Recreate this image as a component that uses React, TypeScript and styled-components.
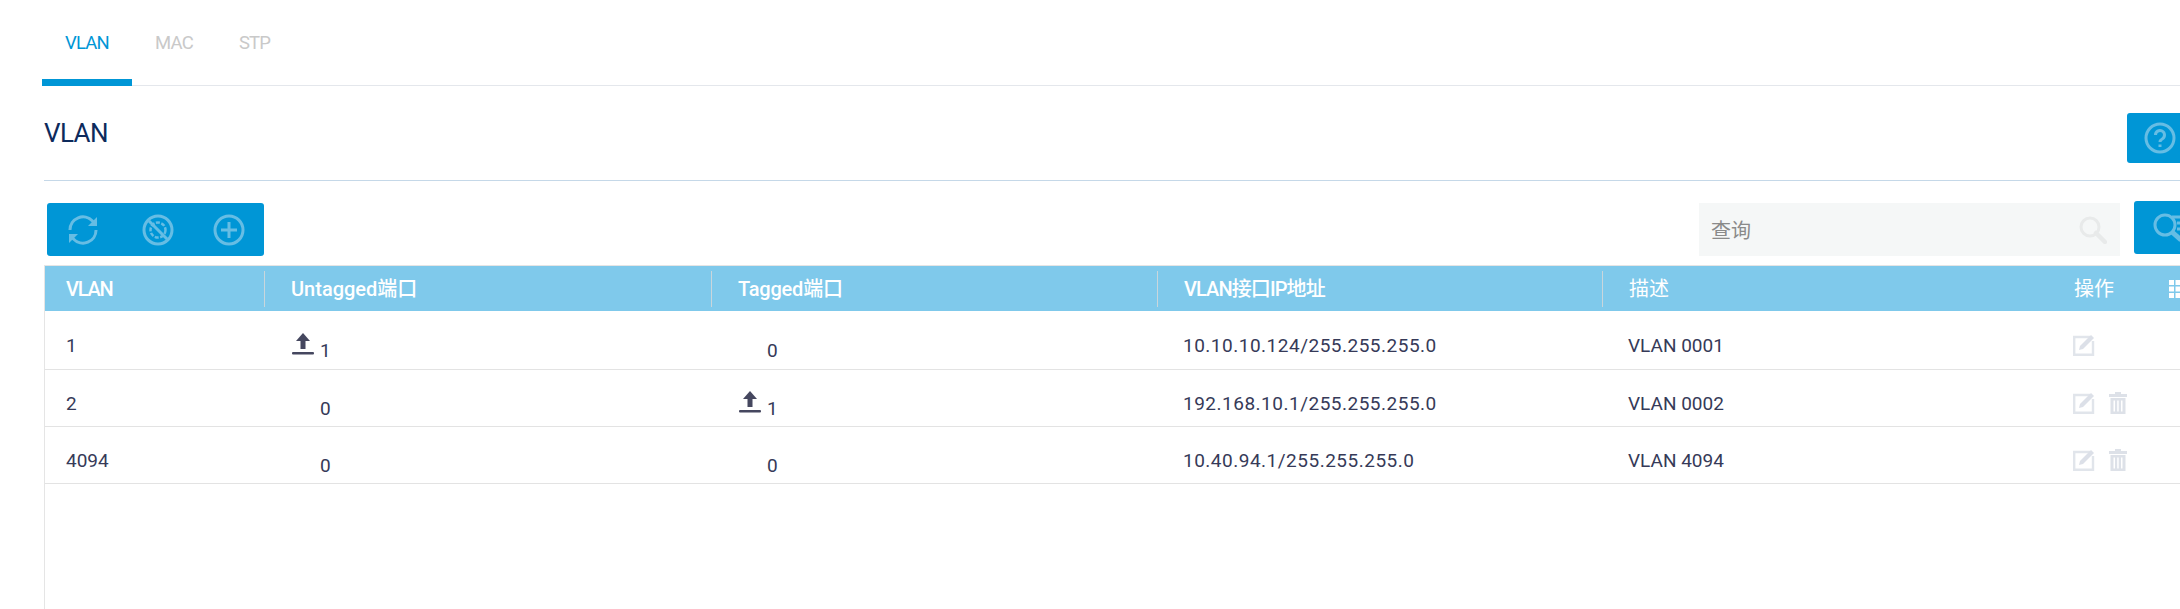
import React from 'react';
import styled, { createGlobalStyle } from 'styled-components';

interface TabProps {
  active?: boolean;
}

interface HeaderCellProps {
  tracking: number;
}

interface VlanRow {
  id: string;
  untagged: string;
  tagged: string;
  address: string;
  description: string;
  removable: boolean;
}

const rows: VlanRow[] = [
  { id: '1', untagged: '1', tagged: '0', address: '10.10.10.124/255.255.255.0', description: 'VLAN 0001', removable: false },
  { id: '2', untagged: '0', tagged: '1', address: '192.168.10.1/255.255.255.0', description: 'VLAN 0002', removable: true },
  { id: '4094', untagged: '0', tagged: '0', address: '10.40.94.1/255.255.255.0', description: 'VLAN 4094', removable: true },
];

const GlobalStyle = createGlobalStyle`
  html, body {
    margin: 0;
    padding: 0;
    background: #fff;
    overflow: hidden;
  }
  body {
    font-family: Roboto, "Noto Sans CJK SC", sans-serif;
  }
`;

const Viewport = styled.div`
  width: 2180px;
  height: 609px;
  overflow: hidden;
`;

const Page = styled.div`
  width: 2290px;
  height: 609px;
  padding-left: 42px;
  box-sizing: border-box;
  display: flex;
  flex-direction: column;
`;

const Tabs = styled.div`
  display: flex;
  height: 86px;
  box-sizing: border-box;
  border-bottom: 1px solid #e4e7ec;
`;

const Tab = styled.div<TabProps>`
  height: 86px;
  box-sizing: border-box;
  padding: 33px 23px 0;
  font-size: 18.5px;
  letter-spacing: -0.8px;
  line-height: 20px;
  color: ${(props) => (props.active ? '#0096d6' : '#c9c9c9')};
  border-bottom: 7px solid ${(props) => (props.active ? '#0096d6' : 'transparent')};
`;

const Content = styled.div`
  margin-left: 2px;
  flex: 1;
  display: flex;
  flex-direction: column;
`;

const TitleRow = styled.div`
  height: 95px;
  box-sizing: border-box;
  border-bottom: 1px solid #c5d8e8;
  display: flex;
  align-items: center;
  justify-content: space-between;
`;

const Title = styled.h1`
  margin: 0;
  font-size: 26px;
  letter-spacing: -0.6px;
  font-weight: 400;
  color: #0d2a5c;
`;

const IconButton = styled.div`
  width: 110px;
  height: 50px;
  background: #0096d6;
  border-radius: 3px;
  display: flex;
  align-items: center;
  padding-left: 17px;
  box-sizing: border-box;
`;

const HelpButton = styled(IconButton)`
  margin: 10px 53px 0 0;
`;

const ToolRow = styled.div`
  height: 84px;
  box-sizing: border-box;
  padding: 22px 46px 0 3px;
  display: flex;
  align-items: flex-start;
`;

const Toolbar = styled.div`
  width: 217px;
  height: 53px;
  background: #0096d6;
  border-radius: 3px;
  display: grid;
  grid-template-columns: 74px 71px 32px;
  align-items: center;
  padding-left: 21px;
  box-sizing: border-box;
`;

const Search = styled.div`
  margin-left: auto;
  width: 421px;
  height: 53px;
  background: #f5f7f7;
  display: flex;
  align-items: center;
  justify-content: space-between;
  padding: 0 13px 0 12px;
  box-sizing: border-box;
  font-size: 20px;
  color: #8a8a8a;
`;

const QueryButton = styled(IconButton)`
  margin: -2px 0 0 14px;
  height: 53px;
  padding-left: 18px;
`;

const Table = styled.div`
  flex: 1;
  border-left: 1px solid #e5e5e5;
`;

const COLUMNS = '219px 447px 446px 445px 447px 1fr';

const HeaderRow = styled.div`
  display: grid;
  grid-template-columns: ${COLUMNS};
  height: 46px;
  box-sizing: border-box;
  background: #7fc9eb;
  border-top: 1px solid #e5e5e5;
  align-items: center;
`;

const HeaderCell = styled.div<HeaderCellProps>`
  height: 36px;
  line-height: 36px;
  padding-left: 27px;
  box-sizing: border-box;
  color: #fff;
  font-size: 20px;
  letter-spacing: ${(props) => props.tracking}px;
  font-weight: 500;
  position: relative;
  &:not(:first-child)::before {
    content: '';
    position: absolute;
    left: 0;
    top: 0;
    width: 1px;
    height: 36px;
    background: #c9d6dc;
  }
`;

const VlanHeaderCell = styled(HeaderCell)`
  padding-left: 21px;
`;

const PlainHeaderCell = styled(HeaderCell)`
  font-weight: 400;
  display: flex;
  align-items: center;
`;

const ActionHeaderCell = styled(PlainHeaderCell)`
  padding-left: 25px;
  &:not(:first-child)::before {
    display: none;
  }
`;

const GridIcon = styled.svg`
  margin-left: 55px;
  flex: none;
`;

const BodyRow = styled.div`
  display: grid;
  grid-template-columns: ${COLUMNS};
  height: 57px;
  box-sizing: border-box;
  border-bottom: 1px solid #e3e3e3;
  align-items: center;
  color: #363a58;
  font-size: 19px;
  ${HeaderRow} + & {
    height: 59px;
  }
`;

const Cell = styled.div`
  padding: 10px 0 0 26px;
`;

const AddressCell = styled(Cell)`
  letter-spacing: 0.5px;
`;

const IdCell = styled(Cell)`
  padding-left: 21px;
`;

const PortCell = styled.div`
  padding: 20px 0 0 56px;
  position: relative;
`;

const UplinkIcon = styled.svg`
  position: absolute;
  left: 28px;
  top: 13px;
`;

const Actions = styled.div`
  display: flex;
  align-items: center;
  gap: 14px;
  padding: 10px 0 0 24px;
`;

const Refresh = () => (
  <svg width="30" height="30" viewBox="0 0 30 30" fill="none" stroke="#66bde4" strokeWidth="3">
    <path d="M2 15A13 13 0 0 1 24.5 6l2 2" />
    <path d="M28 15A13 13 0 0 1 5.5 24l-2-2" />
    <path d="M29 2v9h-9z" fill="#66bde4" stroke="none" />
    <path d="M1 28v-9h9z" fill="#66bde4" stroke="none" />
  </svg>
);

const Ban = () => (
  <svg width="32" height="32" viewBox="0 0 32 32" fill="none" stroke="#66bde4" strokeWidth="3">
    <circle cx="16" cy="16" r="14" />
    <circle cx="16" cy="16" r="7.5" strokeWidth="2.5" strokeDasharray="4 1.5" />
    <path d="M7 7l18 18" />
  </svg>
);

const Plus = () => (
  <svg width="32" height="32" viewBox="0 0 32 32" fill="none" stroke="#66bde4" strokeWidth="3">
    <circle cx="16" cy="16" r="14" />
    <path d="M16 8v16M8 16h16" />
  </svg>
);

const Help = () => (
  <svg width="32" height="32" viewBox="0 0 32 32" fill="none" stroke="#66bde4" strokeWidth="3">
    <circle cx="16" cy="16" r="14" />
    <path d="M11.5 13a4.5 4.5 0 1 1 7 3.7c-1.6 1-2.5 1.8-2.5 3.3" />
    <path d="M16 22.5v2.5" />
  </svg>
);

const QueryIcon = () => (
  <svg width="34" height="34" viewBox="0 0 34 34" fill="none" stroke="#66bde4" strokeWidth="3">
    <circle cx="13" cy="14" r="10" />
    <path d="M20 21l9 8" strokeWidth="5" />
    <path d="M20 6h14M25 12h9M25 18h9" />
  </svg>
);

const SearchIcon = () => (
  <svg width="28" height="28" viewBox="0 0 28 28" fill="none" stroke="#e8eaea" strokeWidth="3">
    <circle cx="11" cy="11" r="9" />
    <path d="M17 17l9 9" strokeWidth="4.5" strokeLinecap="round" />
  </svg>
);

const Uplink = () => (
  <UplinkIcon width="22" height="24" viewBox="0 0 22 24" fill="#45475f">
    <path d="M11 1l7 8h-4.5v8h-5V9H4z" />
    <rect x="0" y="20" width="22" height="2.5" rx="1" />
  </UplinkIcon>
);

const Edit = () => (
  <svg width="22" height="22" viewBox="0 0 22 22" fill="none">
    <path d="M17 3H1.2v17.8H20V7" stroke="#e1e5eb" strokeWidth="2.4" />
    <path d="M6 16l1-4L18 1l3 3L10 15z" fill="#dce0e8" />
  </svg>
);

const Trash = () => (
  <svg width="18" height="22" viewBox="0 0 18 22" fill="#dde1e8">
    <path d="M6 0h6v2h6v3H0V2h6z" />
    <path d="M1.5 6h15v16h-15zM4.5 8.5v11h1.5v-11zM8.2 8.5v11h1.5v-11zM12 8.5v11h1.5v-11z" fillRule="evenodd" />
  </svg>
);

const App: React.FC = () => {
  return (
    <Viewport>
      <GlobalStyle />
      <Page>
        <Tabs>
          <Tab active>VLAN</Tab>
          <Tab>MAC</Tab>
          <Tab>STP</Tab>
        </Tabs>
        <Content>
          <TitleRow>
            <Title>VLAN</Title>
            <HelpButton>
              <Help />
            </HelpButton>
          </TitleRow>
          <ToolRow>
            <Toolbar>
              <Refresh />
              <Ban />
              <Plus />
            </Toolbar>
            <Search>
              查询
              <SearchIcon />
            </Search>
            <QueryButton>
              <QueryIcon />
            </QueryButton>
          </ToolRow>
          <Table>
            <HeaderRow>
              <VlanHeaderCell tracking={-1.2}>VLAN</VlanHeaderCell>
              <HeaderCell tracking={0}>Untagged端口</HeaderCell>
              <HeaderCell tracking={-0.2}>Tagged端口</HeaderCell>
              <HeaderCell tracking={-0.9}>VLAN接口IP地址</HeaderCell>
              <PlainHeaderCell tracking={0}>描述</PlainHeaderCell>
              <ActionHeaderCell tracking={0}>
                操作
                <GridIcon width="18" height="18" viewBox="0 0 18 18" fill="#fff">
                  <path d="M0 0h5v5H0zM6.5 0h5v5h-5zM13 0h5v5h-5zM0 6.5h5v5H0zM6.5 6.5h5v5h-5zM13 6.5h5v5h-5zM0 13h5v5H0zM6.5 13h5v5h-5zM13 13h5v5h-5z" />
                </GridIcon>
              </ActionHeaderCell>
            </HeaderRow>
            {rows.map((row) => (
              <BodyRow key={row.id}>
                <IdCell>{row.id}</IdCell>
                <PortCell>
                  {row.untagged === '1' && <Uplink />}
                  {row.untagged}
                </PortCell>
                <PortCell>
                  {row.tagged === '1' && <Uplink />}
                  {row.tagged}
                </PortCell>
                <AddressCell>{row.address}</AddressCell>
                <Cell>{row.description}</Cell>
                <Actions>
                  <Edit />
                  {row.removable && <Trash />}
                </Actions>
              </BodyRow>
            ))}
          </Table>
        </Content>
      </Page>
    </Viewport>
  );
};

export default App;
